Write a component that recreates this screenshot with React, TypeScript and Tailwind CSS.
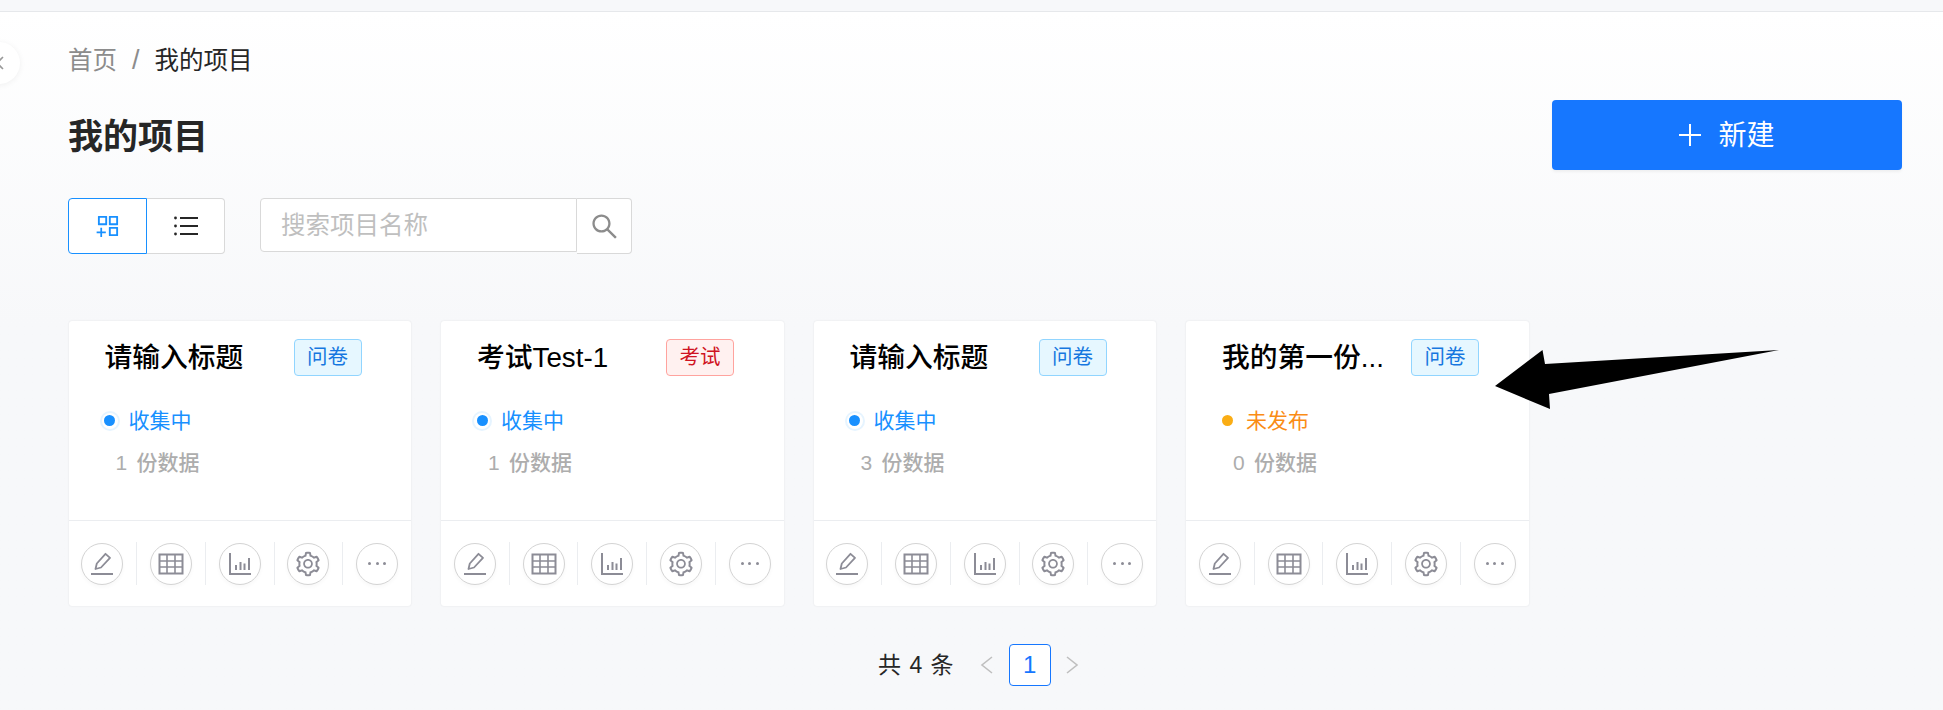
import { AiOutlineAppstoreAdd, AiOutlineSearch, AiOutlineSetting } from "react-icons/ai";

interface Project { title: string; tag: string; published: boolean; count: number; }

const projects: Project[] = [
  { title: "请输入标题", tag: "问卷", published: true, count: 1 },
  { title: "考试Test-1", tag: "考试", published: true, count: 1 },
  { title: "请输入标题", tag: "问卷", published: true, count: 3 },
  { title: "我的第一份...", tag: "问卷", published: false, count: 0 },
];

function EditIcon() {
  return (
    <svg width="24" height="24" viewBox="0 0 24 24" fill="none" stroke="#8c8c96" strokeWidth="1.8">
      <path d="M5.500 17 L6.800 11.500 L15.500 1.800 L20 5.800 L11 15.500 Z" strokeLinejoin="round" />
      <path d="M1 22 H23" strokeWidth="2" />
    </svg>
  );
}

function TableIcon() {
  return (
    <svg width="26" height="22" viewBox="0 0 26 22" fill="none" stroke="#8c8c96" strokeWidth="2">
      <rect x="1.500" y="1.500" width="23" height="19" />
      <path d="M1.500 8 H24.500 M1.500 14 H24.500 M9 1.500 V20.500 M17 1.500 V20.500" strokeWidth="1.600" />
    </svg>
  );
}

function ChartIcon() {
  return (
    <svg width="24" height="24" viewBox="0 0 24 24" fill="none" stroke="#8c8c96" strokeWidth="2">
      <path d="M2 1 V22 H23" />
      <path d="M8 18 V13 M12.500 18 V10 M16.500 18 V11.500 M21 18 V6" />
    </svg>
  );
}

function ActionRow() {
  return (
    <div className="flex items-center h-[86px] border-t border-[#ebedf0]">
      {[<EditIcon key="e" />, <TableIcon key="t" />, <ChartIcon key="c" />, <AiOutlineSetting key="s" className="text-[28px] text-[#8c8c96]" />, <span key="m" className="flex gap-[4.5px]"><i className="w-[3px] h-[3px] rounded-full bg-[#8c8c96]" /><i className="w-[3px] h-[3px] rounded-full bg-[#8c8c96]" /><i className="w-[3px] h-[3px] rounded-full bg-[#8c8c96]" /></span>].map((icon, i) => (
        <div key={i} className={`flex-1 h-[43px] flex items-center justify-center ${i < 4 ? "border-r border-[#ebedf0]" : ""}`}>
          <div className="w-[42px] h-[42px] rounded-full border border-[#d4d4d4] bg-white flex items-center justify-center shadow-[0_2px_4px_rgba(0,0,0,0.03)]">
            {icon}
          </div>
        </div>
      ))}
    </div>
  );
}

function ProjectCard({ p }: { p: Project }) {
  const isExam = p.tag === "考试";
  return (
    <div className="w-[342.5px] h-[285px] bg-white rounded-[3px] shadow-[0_0_2px_rgba(0,0,0,0.10)] flex flex-col">
      <div className="h-[199px]">
        <div className="flex pt-[18px] pl-[36px]">
          <div className="w-[167px] whitespace-nowrap text-[27.75px] leading-[37px] font-medium text-black">{p.title}</div>
          <span className={`ml-[22px] w-[68px] h-[37px] flex items-center justify-center rounded-[4px] border text-[20.5px] ${isExam ? "bg-[#fff1f0] border-[#ffa39e] text-[#cf1322]" : "bg-[#e6f7ff] border-[#91d5ff] text-[#1677e0]"}`}>{p.tag}</span>
        </div>
        <div className="flex items-center h-[30px] mt-[29.5px] pl-[31px]">
          <span className="w-5 h-5 flex items-center justify-center">
            {p.published
              ? <span className="w-5 h-5 rounded-full bg-[#e6f4ff] flex items-center justify-center"><span className="w-[16px] h-[16px] rounded-full bg-white flex items-center justify-center"><span className="w-[11px] h-[11px] rounded-full bg-[#1890ff]" /></span></span>
              : <span className="w-[11px] h-[11px] rounded-full bg-[#faad14]" />}
          </span>
          <span className={`ml-[9px] text-[21px] ${p.published ? "text-[#1890ff]" : "text-[#fa8c16]"}`}>{p.published ? "收集中" : "未发布"}</span>
        </div>
        <div className="flex items-center h-[30px] mt-[12px] pl-[47px] text-[21px] font-medium text-[#adadad]">
          <span className="w-[21px]">{p.count}</span>
          <span>份数据</span>
        </div>
      </div>
      <ActionRow />
    </div>
  );
}

export default function App() {
  return (
    <div className="relative w-[1943px] h-[710px] overflow-hidden bg-[#f7f8fa] text-[#262626] font-['Liberation_Sans','Noto_Sans_CJK_SC',sans-serif]">
      <div className="h-[12px] bg-[#f7f8fa] border-b border-[#e6e8eb]" />

      <div className="absolute left-[-22px] top-[42px] w-[42px] h-[42px] rounded-full bg-white shadow-[0_1px_6px_rgba(0,0,0,0.06)] flex items-center justify-end pr-[16px]">
        <svg width="8" height="14" viewBox="0 0 8 14" fill="none" stroke="#999999" strokeWidth="1.600"><path d="M7 1 L1 7 L7 13" /></svg>
      </div>

      <main className="h-[698px] pl-[68px] pr-[41px] bg-gradient-to-b from-white to-[#f7f8fa] to-[45%]">
        <div className="pt-[31px] flex items-center h-[66px] text-[24.5px] leading-[36px]">
          <span className="text-[#8c8c8c]">首页</span>
          <span className="mx-[15px] text-[27px] leading-[27px] text-[#8c8c8c]">/</span>
          <span>我的项目</span>
        </div>

        <div className="mt-[22px] flex items-center justify-between h-[70px]">
          <h1 className="text-[35px] font-bold pt-[4px]">我的项目</h1>
          <button className="w-[350px] h-[70px] rounded-[4px] bg-[#1677ff] text-white flex items-center justify-center gap-[17px] text-[28px] shadow-[0_2px_3px_rgba(0,0,0,0.05)]">
            <svg width="22" height="22" viewBox="0 0 22 22" stroke="white" strokeWidth="2"><path d="M0 11 H22 M11 0 V22" /></svg>
            <span className="pt-[1px]">新建</span>
          </button>
        </div>

        <div className="mt-[28px] flex items-start">
          <div className="flex h-[56px]">
            <div className="w-[79px] flex items-center justify-center bg-white border border-[#1890ff] rounded-l-[4px]">
              <AiOutlineAppstoreAdd className="text-[28px] text-[#1890ff]" />
            </div>
            <div className="w-[78px] flex items-center justify-center bg-white border border-l-0 border-[#d9d9d9] rounded-r-[4px]">
              <svg width="24" height="20" viewBox="0 0 24 20" fill="#262626">
                <circle cx="1.500" cy="2" r="1.400" /><circle cx="1.500" cy="10" r="1.400" /><circle cx="1.500" cy="18" r="1.400" />
                <path d="M6 1 H24 V3 H6 Z M6 9 H24 V11 H6 Z M6 17 H24 V19 H6 Z" />
              </svg>
            </div>
          </div>
          <div className="ml-[35px] flex">
            <div className="w-[317px] h-[54px] flex items-center pl-[20px] pt-[2px] bg-white border border-[#d9d9d9] rounded-l-[4px] text-[24.5px] text-[#bfbfbf]">搜索项目名称</div>
            <div className="w-[55px] h-[56px] flex items-center justify-center bg-white border border-l-0 border-[#d9d9d9] rounded-r-[4px]">
              <AiOutlineSearch className="text-[31px] text-[#8c8c8c]" />
            </div>
          </div>
        </div>

        <div className="mt-[67px] pl-[0.5px] flex gap-[30px]">
          {projects.map((p, i) => <ProjectCard key={i} p={p} />)}
        </div>

        <div className="mt-[38px] flex items-center h-[42px] pl-[810px]">
          <span className="text-[23px] tracking-[1px] whitespace-pre">共 4 条</span>
          <svg className="ml-[25px]" width="14" height="20" viewBox="0 0 14 20" fill="none" stroke="#bfbfbf" strokeWidth="1.600"><path d="M12 2 L2 10 L12 18" /></svg>
          <div className="ml-[15px] w-[42px] h-[42px] bg-white border border-[#1677ff] rounded-[4px] flex items-center justify-center text-[24px] text-[#1677ff]">1</div>
          <svg className="ml-[14px]" width="14" height="20" viewBox="0 0 14 20" fill="none" stroke="#bfbfbf" strokeWidth="1.600"><path d="M2 2 L12 10 L2 18" /></svg>
        </div>
      </main>

      {/* annotation arrow drawn over the page */}
      <svg className="absolute left-[1490px] top-[345px]" width="295" height="70" viewBox="0 0 295 70" fill="#000">
        <path d="M5 41 L52.500 5 L55 19 L289 5 L59 49 L60 64 Z" />
      </svg>
    </div>
  );
}
